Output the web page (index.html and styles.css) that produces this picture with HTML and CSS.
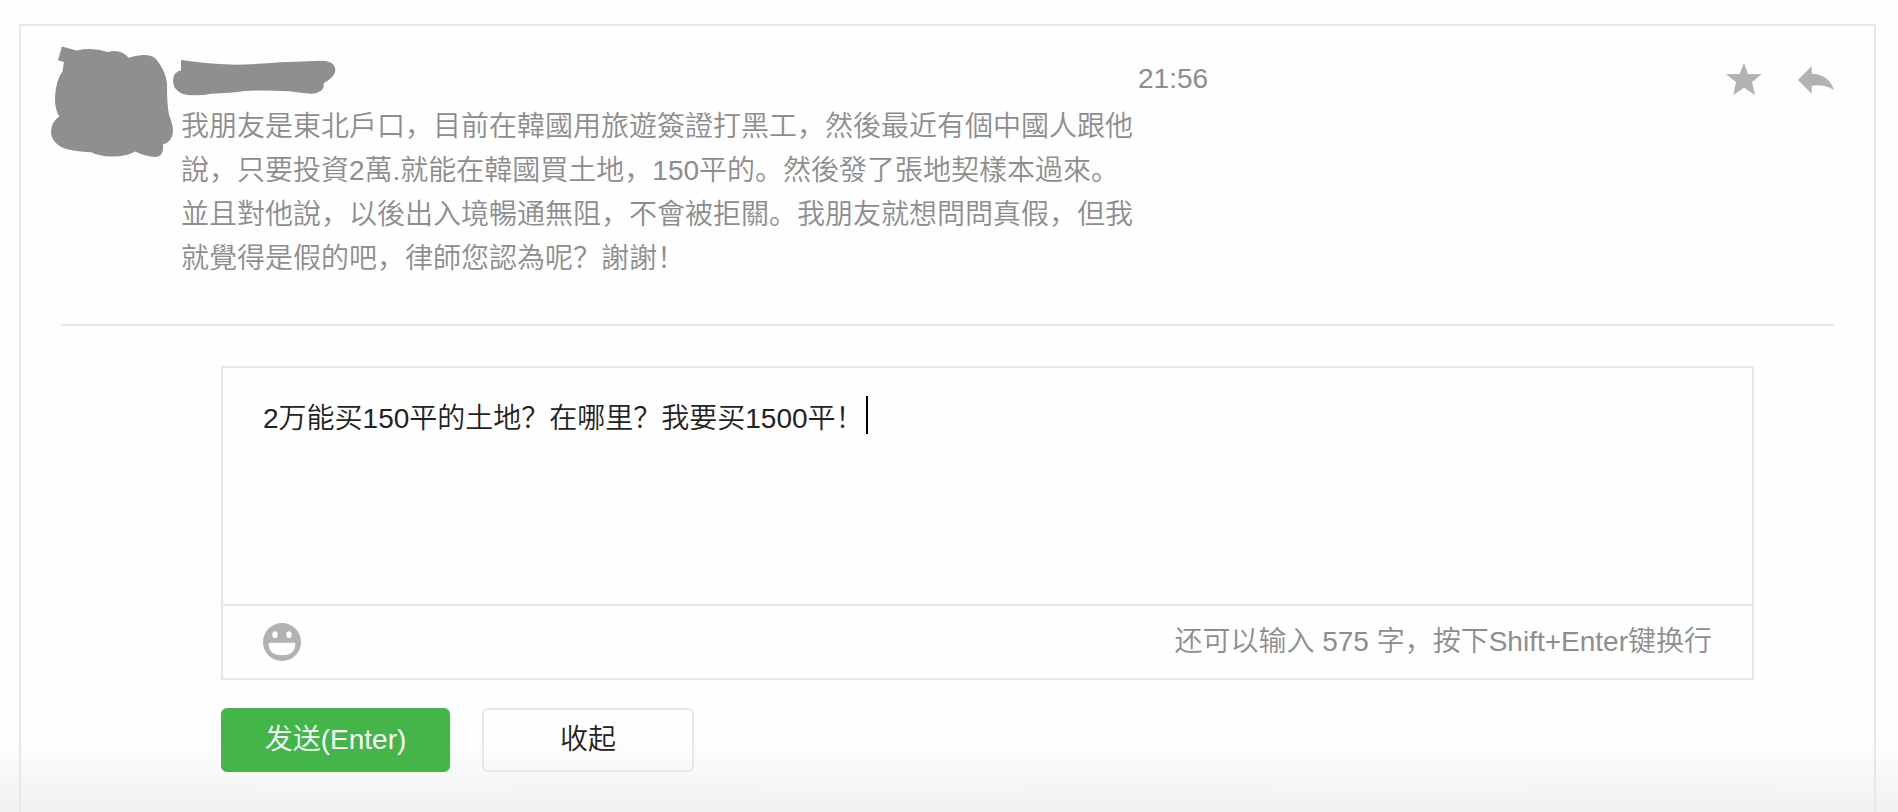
FILE: index.html
```html
<!DOCTYPE html>
<html lang="zh-CN">
<head>
  <meta charset="UTF-8">
  <meta name="viewport" content="width=device-width, initial-scale=1.0">
  <title>消息管理</title>
  <link rel="stylesheet" href="styles.css">
</head>
<body>

  <main class="card">
    <article class="message">
      <svg class="avatar" viewBox="153 138 369 336" role="img" aria-label="头像">
        <path d="M186 138L230 150Q280 140 325 155Q362 143 388 172Q446 154 470 175Q500 212 504 250Q503 310 510 345Q522 375 522 395Q520 426 492 434Q494 472 470 472Q440 472 408 456Q380 471 340 471Q295 470 275 458Q205 455 180 440Q153 422 153 395Q155 365 178 350Q165 330 165 295Q167 240 188 213L192 185L174 180Z"/>
      </svg>

      <div class="content">
        <header class="message-header">
          <svg class="nickname" viewBox="516 178 489 108" role="img" aria-label="昵称">
            <path d="M540 178Q640 192 705 192Q760 191 840 185Q900 182 965 180Q1003 182 1003 210Q1000 230 968 248Q972 276 930 279Q900 278 865 272Q780 268 730 271Q690 278 630 279Q600 286 560 283Q516 276 516 238Q518 214 540 209Z"/>
          </svg>
        </header>
        <p class="text">我朋友是東北戶口，目前在韓國用旅遊簽證打黑工，然後最近有個中國人跟他說，只要投資2萬.就能在韓國買土地，150平的。然後發了張地契樣本過來。並且對他說，以後出入境暢通無阻，不會被拒關。我朋友就想問問真假，但我就覺得是假的吧，律師您認為呢？謝謝！</p>
      </div>

      <time class="time" datetime="21:56">21:56</time>

      <div class="actions">
        <button type="button" class="icon-btn" aria-label="收藏">
          <svg viewBox="78 66 108 108"><path d="M132 68L144 102L185 103L156 126L165 165L132 143L100 165L108 126L78 103L119 102Z"/></svg>
        </button>
        <button type="button" class="icon-btn" aria-label="回复">
          <svg viewBox="294 66 108 108"><path d="M294 120L335 78V101Q386 102 402 150Q375 132 335 137V161Z"/></svg>
        </button>
      </div>
    </article>

    <hr class="divider">

    <form class="reply">
      <div class="editor">
        <div class="editor-body">
          <textarea class="input" aria-label="回复内容" spellcheck="false">2万能买150平的土地？在哪里？我要买1500平！</textarea>
          <span class="caret"></span>
        </div>
        <div class="toolbar">
          <button type="button" class="icon-btn emoji" aria-label="表情">
            <svg viewBox="69 66 114 114">
              <path fill-rule="evenodd" d="M126 66A57 57 0 1 1 126 180A57 57 0 1 1 126 66ZM105 91A8 10 0 1 0 105 111A8 10 0 1 0 105 91ZM147 91A8 10 0 1 0 147 111A8 10 0 1 0 147 91ZM86 127Q85 163 126 163Q167 163 166 127Q166 125 163 125H89Q86 125 86 127Z"/>
            </svg>
          </button>
          <span class="tips">还可以输入 575 字，按下Shift+Enter键换行</span>
        </div>
      </div>

      <div class="buttons">
        <button type="button" class="btn btn-send">发送(Enter)</button>
        <button type="button" class="btn btn-cancel">收起</button>
      </div>
    </form>
  </main>

</body>
</html>
```
FILE: styles.css
```css
* {
  box-sizing: border-box;
}

body {
  display: flex;
  flex-direction: column;
  min-height: 100vh;
  margin: 0;
  padding: 24px 22px 0 19px;
  background: linear-gradient(to top, #f1f1f1, #fefefe 72px);
  color: #222;
  font-family: "Liberation Sans", "Noto Sans CJK SC", sans-serif;
  font-size: 28px;
  font-weight: 350;
  line-height: 44px;
}

button,
textarea {
  font: inherit;
  color: inherit;
}

.card {
  flex: 1;
  border: 2px solid #e7e7eb;
  border-bottom: none;
}

/* message */
.message {
  display: flex;
  padding: 20px 40px 0 30px;
  color: #8d8d8d;
}

.avatar {
  flex: none;
  width: 122px;
  height: 112px;
  fill: #8f8f8f;
}

.content {
  width: 965px;
}

.message-header {
  display: flex;
  align-items: center;
  height: 59px;
  padding-top: 4px;
}

.nickname {
  width: 163px;
  height: 36px;
  fill: #8f8f8f;
}

.text {
  margin: 0;
  padding: 0 4px 0 8px;
}

.time {
  padding-top: 11px;
}

.actions {
  display: flex;
  gap: 36px;
  height: 36px;
  margin-top: 16px;
  margin-left: auto;
}

.icon-btn {
  width: 36px;
  height: 36px;
  padding: 0;
  border: none;
  background: none;
  cursor: pointer;
}

.icon-btn svg {
  display: block;
  width: 100%;
  fill: #b2b2b2;
}

.divider {
  height: 2px;
  margin: 43px 40px 40px;
  border: none;
  background-color: #e7e7eb;
}

/* reply form */
.reply {
  margin: 0 120px 0 200px;
}

.editor {
  border: 2px solid #e7e7eb;
}

.editor-body {
  position: relative;
}

.input {
  display: block;
  width: 100%;
  height: 236px;
  padding: 29px 40px;
  border: none;
  outline: none;
  background: none;
  resize: none;
}

.caret {
  position: absolute;
  top: 28px;
  left: 643px;
  width: 2px;
  height: 38px;
  background-color: #000;
}

.toolbar {
  display: flex;
  align-items: center;
  justify-content: space-between;
  height: 74px;
  padding: 0 40px;
  border-top: 2px solid #e7e7eb;
}

.emoji {
  width: 38px;
  height: 38px;
}

.tips {
  color: #8d8d8d;
}

.buttons {
  display: flex;
  gap: 32px;
  padding: 28px 0 40px;
}

.btn {
  height: 64px;
  padding: 0;
  border: 2px solid #e7e7eb;
  border-radius: 6px;
  background: none;
  cursor: pointer;
}

.btn-send {
  width: 229px;
  border-color: #44b549;
  background-color: #44b549;
  color: #fff;
}

.btn-cancel {
  width: 212px;
}
```
